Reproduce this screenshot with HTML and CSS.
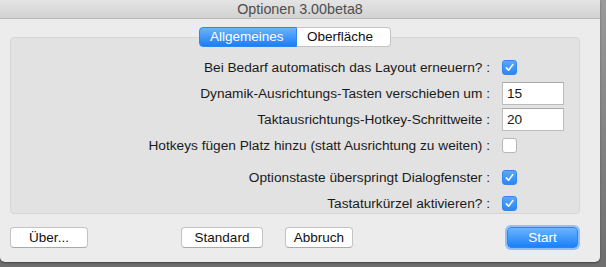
FILE: index.html
```html
<!DOCTYPE html>
<html lang="de">
<head>
    <meta charset="UTF-8">
    <title>Optionen 3.00beta8</title>
    <link rel="stylesheet" href="styles.css">
</head>
<body>

<div class="window">
    <div class="titlebar">Optionen 3.00beta8</div>

    <div class="content">
        <div class="tabs">
            <span class="tab active">Allgemeines</span>
            <span class="tab">Oberfläche</span>
        </div>

        <div class="group">
            <div class="row">
                <label>Bei Bedarf automatisch das Layout erneuern? :</label>
                <span class="check on"><svg viewBox="0 0 14 14"><path d="M3.6 7.4 L6 10 L10.6 3.8" /></svg></span>
            </div>
            <div class="row">
                <label>Dynamik-Ausrichtungs-Tasten verschieben um :</label>
                <input class="field" type="text" value="15">
            </div>
            <div class="row">
                <label>Taktausrichtungs-Hotkey-Schrittweite :</label>
                <input class="field" type="text" value="20">
            </div>
            <div class="row">
                <label>Hotkeys fügen Platz hinzu (statt Ausrichtung zu weiten) :</label>
                <span class="check"></span>
            </div>
            <div class="row spaced">
                <label>Optionstaste überspringt Dialogfenster :</label>
                <span class="check on"><svg viewBox="0 0 14 14"><path d="M3.6 7.4 L6 10 L10.6 3.8" /></svg></span>
            </div>
            <div class="row">
                <label>Tastaturkürzel aktivieren? :</label>
                <span class="check on"><svg viewBox="0 0 14 14"><path d="M3.6 7.4 L6 10 L10.6 3.8" /></svg></span>
            </div>
        </div>

        <div class="buttons">
            <button class="btn about">Über...</button>
            <button class="btn standard">Standard</button>
            <button class="btn cancel">Abbruch</button>
            <button class="btn start">Start</button>
        </div>
    </div>
</div>

</body>
</html>
```

FILE: styles.css
```css
body {
    margin: 0;
    width: 606px;
    height: 267px;
    overflow: hidden;
    background: linear-gradient(to bottom, #9a9a9a, #6e6e6e);
    font-family: 'Liberation Sans', Arial, sans-serif;
    font-size: 13px;
    color: #1a1a1a;
}
.window {
    width: 600px;
    height: 262px;
    background-color: #ececec;
    border-radius: 0 0 5px 5px;
    box-shadow: 0 1px 2px rgba(0, 0, 0, 0.4);
    display: flex;
    flex-direction: column;
}
.titlebar {
    height: 18px;
    line-height: 18px;
    text-align: center;
    font-size: 14.3px;
    color: #4d4d4d;
    background: linear-gradient(to bottom, #e4e4e4, #d2d2d2);
    border-bottom: 1px solid #b9b9b9;
}
.content {
    padding: 8px 20px 0 10px;
}
.tabs {
    display: flex;
    justify-content: center;
    position: relative;
    z-index: 1;
    height: 20px;
    font-size: 13.5px;
}
.tab {
    display: block;
    height: 18px;
    line-height: 18px;
    padding: 0 0 0 10px;
    width: 83px;
    background-color: #fff;
    border: 1px solid #c4c4c4;
    border-left: none;
    border-radius: 0 4px 4px 0;
    color: #111;
}
.tab.active {
    width: 86px;
    border: 1px solid #2d86f5;
    border-radius: 4px 0 0 4px;
    background: linear-gradient(to bottom, #6cb3fa, #1a7ff7);
    color: #fff;
}
.group {
    margin-top: -10px;
    height: 177px;
    padding-top: 16px;
    box-sizing: border-box;
    background-color: #e2e2e2;
    border: 1px solid #d6d6d6;
    border-radius: 4px;
}
.row {
    display: grid;
    grid-template-columns: 1fr 62px;
    column-gap: 12px;
    align-items: center;
    height: 26px;
    padding-right: 15px;
    font-size: 13.7px;
}
.row.spaced {
    margin-top: 6px;
}
.row label {
    text-align: right;
}
.check {
    display: block;
    width: 13px;
    height: 13px;
    border: 1px solid #b6b6b6;
    border-radius: 3px;
    background-color: #fff;
}
.check.on {
    border-color: #3187f2;
    background: linear-gradient(to bottom, #5aa8f8, #2e86f4);
}
.check svg {
    display: block;
    width: 13px;
    height: 13px;
}
.check path {
    fill: none;
    stroke: #fff;
    stroke-width: 1.6;
    stroke-linecap: round;
    stroke-linejoin: round;
}
.field {
    box-sizing: border-box;
    width: 62px;
    height: 23px;
    margin: 0;
    padding: 1px 0 0 4px;
    border: 1px solid #bcbcbc;
    border-top-color: #a9a9a9;
    background-color: #fff;
    font-family: inherit;
    font-size: 13.7px;
    color: #1a1a1a;
    outline: none;
}
.buttons {
    display: flex;
    align-items: center;
    margin-top: 13px;
    padding-right: 2px;
}
.btn {
    height: 21px;
    padding: 0;
    border: 1px solid #c3c3c3;
    border-bottom-color: #aaaaaa;
    border-radius: 4px;
    background-color: #fff;
    font-family: inherit;
    font-size: 13.5px;
    color: #111;
}
.about {
    width: 78px;
}
.standard {
    width: 82px;
    margin-left: 93px;
}
.cancel {
    width: 68px;
    margin-left: 22px;
}
.start {
    width: 71px;
    margin-left: auto;
    border-color: #2a84f6;
    background: linear-gradient(to bottom, #6db4fb, #1b80f8);
    color: #fff;
    box-shadow: 0 0 0 2px #8fc0fa;
}
```
